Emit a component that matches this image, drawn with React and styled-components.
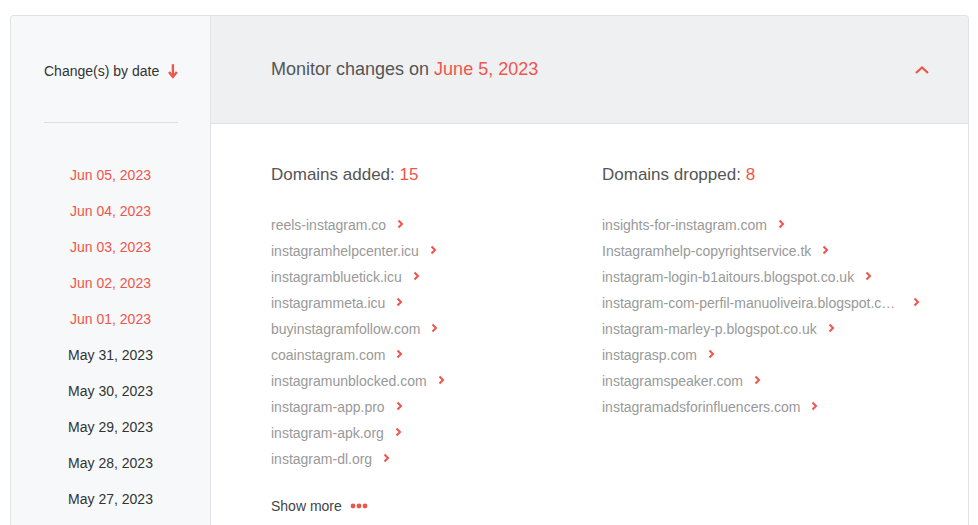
import React from "react";
import styled, { createGlobalStyle } from "styled-components";

const Global = createGlobalStyle`
  html, body { margin: 0; padding: 0; background: #fff; }
  body { font-family: "Liberation Sans", Arial, sans-serif; }
`;

const RED = "#f0554b";

const Page = styled.div`
  padding: 15px 9px 0 10px;
  height: 525px;
  box-sizing: border-box;
  overflow: hidden;
`;

const Card = styled.div`
  display: flex;
  border: 1px solid #e1e2e4;
  border-bottom: none;
  border-radius: 4px 4px 0 0;
  height: 540px;
  overflow: hidden;
`;

const Sidebar = styled.aside`
  width: 199px;
  flex-shrink: 0;
  background: #f7f8fa;
  border-right: 1px solid #e1e2e4;
  display: flex;
  flex-direction: column;
  align-items: center;
`;

const SideHead = styled.div`
  height: 107px;
  width: 134px;
  box-sizing: border-box;
  border-bottom: 1px solid #dedfe2;
  display: flex;
  align-items: center;
  justify-content: center;
  gap: 9px;
  font-size: 14px;
  color: #333;
  white-space: nowrap;
  padding-top: 4px;
  margin-left: 1px;
`;

const DateList = styled.ul`
  list-style: none;
  margin: 0;
  padding: 42px 0 0;
  display: flex;
  flex-direction: column;
  align-items: center;
`;

const DateItem = styled.li`
  height: 36px;
  line-height: 20px;
  font-size: 14px;
  color: ${(p) => (p.$active ? RED : "#333")};
`;

const Main = styled.main`
  flex: 1;
  display: flex;
  flex-direction: column;
`;

const Header = styled.div`
  height: 107px;
  background: #eff0f2;
  border-bottom: 1px solid #e1e2e4;
  display: flex;
  align-items: center;
  justify-content: space-between;
  padding: 0 38px 0 60px;
`;

const Title = styled.h2`
  margin: 0;
  font-weight: normal;
  font-size: 18px;
  color: #555;
`;

const Red = styled.span`
  color: ${RED};
`;

const Body = styled.div`
  display: grid;
  grid-template-columns: 331px 1fr;
  padding: 40px 0 0 60px;
`;

const Column = styled.section`
  min-width: 0;
`;

const ColTitle = styled.h3`
  margin: 0 0 26px;
  font-weight: normal;
  font-size: 17px;
  line-height: 22px;
  color: #555;
`;

const DomainList = styled.ul`
  list-style: none;
  margin: 0;
  padding: 0;
`;

const Domain = styled.li`
  height: 26px;
  display: flex;
  align-items: center;
  gap: 11px;
  font-size: 14px;
  color: #999;
`;

const DomainText = styled.span`
  max-width: 300px;
  white-space: nowrap;
  overflow: hidden;
  text-overflow: ellipsis;
`;

const ShowMore = styled.div`
  margin-top: 26px;
  display: flex;
  align-items: center;
  gap: 8px;
  font-size: 14px;
  color: #444;
`;

const Chev = () => (
  <svg width="7" height="10" viewBox="0 0 7 10" style={{ flexShrink: 0, marginTop: -2 }}>
    <path d="M1.5 1.5 L5 5 L1.5 8.5" fill="none" stroke={RED} strokeWidth="2" />
  </svg>
);

const DownArrow = () => (
  <svg width="10" height="16" viewBox="0 0 10 16">
    <path d="M5 1 V13" stroke={RED} strokeWidth="2.4" />
    <path d="M1 9 L5 14 L9 9" fill="none" stroke={RED} strokeWidth="2.4" />
  </svg>
);

const ChevUp = () => (
  <svg width="16" height="10" viewBox="0 0 16 10">
    <path d="M2 8 L8 2.5 L14 8" fill="none" stroke={RED} strokeWidth="2.2" />
  </svg>
);

const Dots = () => (
  <svg width="18" height="6" viewBox="0 0 18 6">
    <circle cx="3" cy="3" r="2.4" fill={RED} />
    <circle cx="9" cy="3" r="2.4" fill={RED} />
    <circle cx="15" cy="3" r="2.4" fill={RED} />
  </svg>
);

const dates = [
  ["Jun 05, 2023", true],
  ["Jun 04, 2023", true],
  ["Jun 03, 2023", true],
  ["Jun 02, 2023", true],
  ["Jun 01, 2023", true],
  ["May 31, 2023", false],
  ["May 30, 2023", false],
  ["May 29, 2023", false],
  ["May 28, 2023", false],
  ["May 27, 2023", false],
];

const added = [
  "reels-instagram.co",
  "instagramhelpcenter.icu",
  "instagrambluetick.icu",
  "instagrammeta.icu",
  "buyinstagramfollow.com",
  "coainstagram.com",
  "instagramunblocked.com",
  "instagram-app.pro",
  "instagram-apk.org",
  "instagram-dl.org",
];

const dropped = [
  "insights-for-instagram.com",
  "Instagramhelp-copyrightservice.tk",
  "instagram-login-b1aitours.blogspot.co.uk",
  "instagram-com-perfil-manuoliveira.blogspot.co.uk",
  "instagram-marley-p.blogspot.co.uk",
  "instagrasp.com",
  "instagramspeaker.com",
  "instagramadsforinfluencers.com",
];

export default function App() {
  return (
    <>
      <Global />
      <Page>
        <Card>
          <Sidebar>
            <SideHead>
              Change(s) by date <DownArrow />
            </SideHead>
            <DateList>
              {dates.map(([d, a]) => (
                <DateItem key={d} $active={a}>
                  {d}
                </DateItem>
              ))}
            </DateList>
          </Sidebar>
          <Main>
            <Header>
              <Title>
                Monitor changes on <Red>June 5, 2023</Red>
              </Title>
              <ChevUp />
            </Header>
            <Body>
              <Column>
                <ColTitle>
                  Domains added: <Red>15</Red>
                </ColTitle>
                <DomainList>
                  {added.map((d) => (
                    <Domain key={d}>
                      <DomainText>{d}</DomainText>
                      <Chev />
                    </Domain>
                  ))}
                </DomainList>
                <ShowMore>
                  Show more <Dots />
                </ShowMore>
              </Column>
              <Column>
                <ColTitle>
                  Domains dropped: <Red>8</Red>
                </ColTitle>
                <DomainList>
                  {dropped.map((d) => (
                    <Domain key={d}>
                      <DomainText>{d}</DomainText>
                      <Chev />
                    </Domain>
                  ))}
                </DomainList>
              </Column>
            </Body>
          </Main>
        </Card>
      </Page>
    </>
  );
}
